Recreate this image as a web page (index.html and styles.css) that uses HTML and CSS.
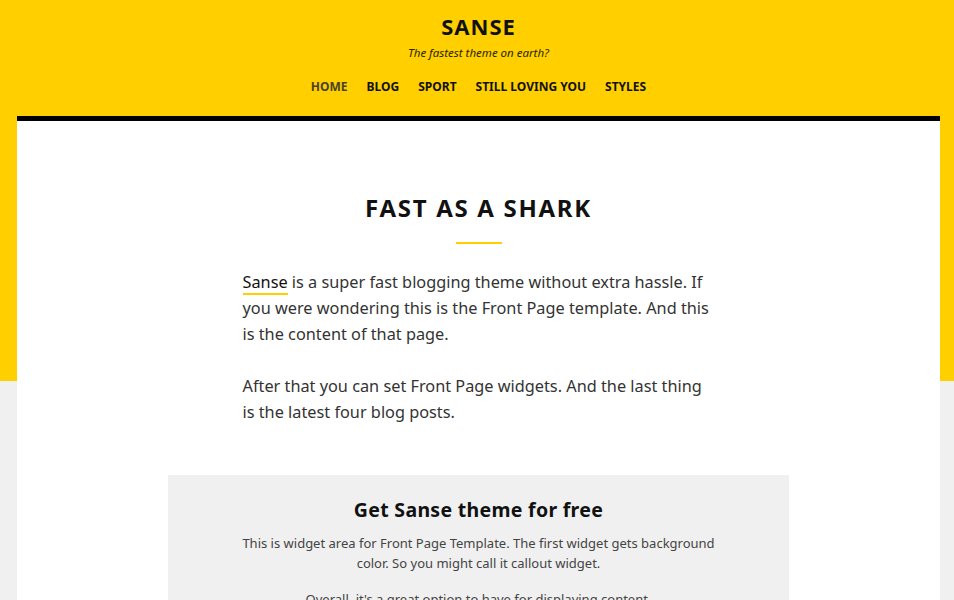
FILE: index.html
```html
<!DOCTYPE html>
<html lang="en">
<head>
<meta charset="utf-8">
<title>Sanse</title>
<link rel="stylesheet" href="styles.css">
</head>
<body>
<header class="site-header">
  <div class="site-title">SANSE</div>
  <div class="site-tagline">The fastest theme on earth?</div>
  <nav class="main-nav">
    <a class="nav-item current" href="#">Home</a>
    <a class="nav-item" href="#">Blog</a>
    <a class="nav-item" href="#">Sport</a>
    <a class="nav-item" href="#">Still loving you</a>
    <a class="nav-item" href="#">Styles</a>
  </nav>
</header>
<main class="card">
  <h1 class="page-title">FAST AS A SHARK</h1>
  <div class="title-rule"></div>
  <div class="entry">
    <p><a class="inline-link" href="#">Sanse</a> is a super fast blogging theme without extra hassle. If you were wondering this is the Front Page template. And this is the content of that page.</p>
    <p>After that you can set Front Page widgets. And the last thing is the latest four blog posts.</p>
  </div>
  <section class="callout">
    <h2 class="callout-title">Get Sanse theme for free</h2>
    <p>This is widget area for Front Page Template. The first widget gets background color. So you might call it callout widget.</p>
    <p>Overall, it's a great option to have for displaying content.</p>
  </section>
</main>
</body>
</html>
```
FILE: styles.css
```css
html, body {
  margin: 0;
  padding: 0;
}
body {
  font-family: "Noto Sans", "Open Sans", sans-serif;
  color: #333;
  background: #f0f0f0 linear-gradient(#ffcf00, #ffcf00) no-repeat;
  background-size: 100% 381px;
}
.site-header {
  display: flex;
  flex-direction: column;
  align-items: center;
  padding: 12px 0 0 3px;
  height: 103px;
  box-sizing: border-box;
}
.site-title {
  font-size: 22px;
  font-weight: 700;
  letter-spacing: 1px;
  color: #111;
  line-height: 28px;
}
.site-tagline {
  font-size: 11.5px;
  font-style: italic;
  color: #2a2500;
  line-height: 18px;
  margin-top: 4px;
}
.main-nav {
  display: flex;
  gap: 19px;
  margin-top: 17px;
}
.nav-item {
  font-size: 12px;
  font-weight: 700;
  text-transform: uppercase;
  color: #111;
  text-decoration: none;
  line-height: 16px;
}
.nav-item.current {
  color: #4a4228;
}
.card {
  display: block;
  margin: 13px 14px 0 17px;
  background: #fff;
  border-top: 5px solid #000;
  padding: 70px 0 40px;
}
.page-title {
  margin: 0;
  text-align: center;
  font-size: 24px;
  font-weight: 700;
  letter-spacing: 1.7px;
  color: #111;
  line-height: 34px;
}
.title-rule {
  width: 46px;
  height: 2px;
  background: #ffcf00;
  margin: 17px auto 0;
}
.entry {
  width: 472px;
  margin: 25px auto 0;
  font-size: 16.3px;
  line-height: 26px;
  color: #333;
}
.entry p {
  margin: 0 0 26px;
}
.inline-link {
  color: #111;
  text-decoration: none;
  border-bottom: 2px solid #ffcf00;
}
.callout {
  width: 621px;
  margin: 50px auto 0;
  background: #f0f0f0;
  padding: 22px 0 20px;
  text-align: center;
}
.callout-title {
  margin: 0 0 10px;
  font-size: 19.5px;
  font-weight: 700;
  color: #111;
  line-height: 26px;
  letter-spacing: 0.3px;
}
.callout p {
  width: 480px;
  margin: 0 auto 16px;
  font-size: 13px;
  line-height: 20px;
  color: #444;
}
```
